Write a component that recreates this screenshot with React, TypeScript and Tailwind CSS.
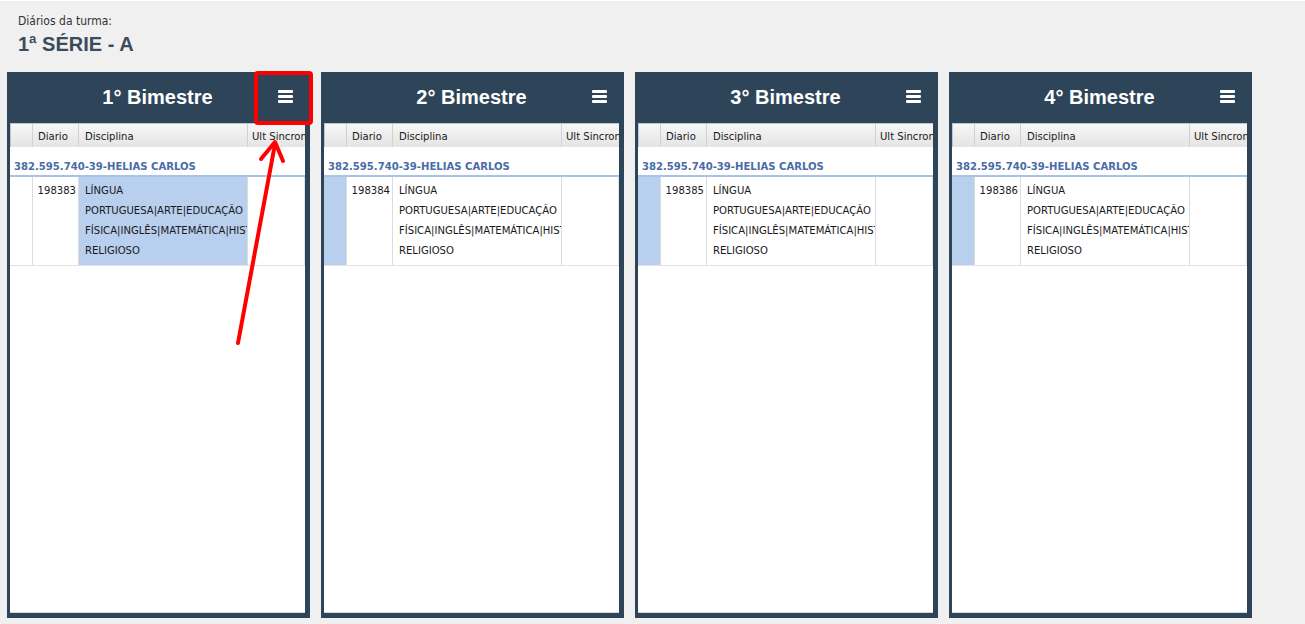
import React from 'react';

type Bimestre = {
  titulo: string;
  diario: string;
  marcada: 'sel' | 'disc';
};

const bimestres: Bimestre[] = [
  { titulo: '1° Bimestre', diario: '198383', marcada: 'disc' },
  { titulo: '2° Bimestre', diario: '198384', marcada: 'sel' },
  { titulo: '3° Bimestre', diario: '198385', marcada: 'sel' },
  { titulo: '4° Bimestre', diario: '198386', marcada: 'sel' },
];

const linhasDisciplina = [
  'LÍNGUA',
  'PORTUGUESA|ARTE|EDUCAÇÃO',
  'FÍSICA|INGLÊS|MATEMÁTICA|HISTÓRIA|GEOGRAFIA|ENSINO',
  'RELIGIOSO',
];

function MenuIcon() {
  return (
    <div className="flex flex-col gap-[2px] w-[15px]">
      <span className="h-[3px] bg-white rounded-[1px]" />
      <span className="h-[3px] bg-white rounded-[1px]" />
      <span className="h-[3px] bg-white rounded-[1px]" />
    </div>
  );
}

function Painel({ b }: { b: Bimestre }) {
  return (
    <div className="w-[303px] h-[546px] flex flex-col bg-[#2e4559] pl-[3px] pr-[5px] pb-[5px]">
      <div className="h-[51px] shrink-0 grid grid-cols-[1fr_auto_1fr] items-center pb-[2px]">
        <div />
        <h2 className="text-white text-[20px] font-bold font-['Liberation_Sans',Arial,sans-serif] leading-none whitespace-nowrap">
          {b.titulo}
        </h2>
        <div className="flex justify-end pr-[12px]">
          <MenuIcon />
        </div>
      </div>

      <div className="flex-1 bg-white border-b border-[#d4d8dc] text-[11.2px] text-[#1a1a1a]">
        {/* cabeçalho da grade */}
        <div className="h-[24px] flex border-t border-l border-[#b7c7d8] bg-gradient-to-b from-[#f7f7f7] to-[#e4e4e4]">
          <div className="w-[22px] border-r border-[#d2d2d2]" />
          <div className="w-[46px] border-r border-[#d2d2d2] pl-[5px] pt-[3px] flex items-center">Diario</div>
          <div className="w-[169px] border-r border-[#d2d2d2] pl-[6px] pt-[3px] flex items-center">Disciplina</div>
          <div className="flex-1 pl-[4px] pt-[3px] flex items-center overflow-hidden whitespace-nowrap">Ult Sincronização</div>
        </div>

        {/* grupo do professor */}
        <div className="pt-[13px] pb-[1px] pl-[4px] border-b-2 border-[#a9c3e6]">
          <div className="leading-[14px] font-bold text-[#4a6ca6] whitespace-nowrap">
            382.595.740-39-HELIAS CARLOS
          </div>
        </div>

        {/* linha do diário */}
        <div className="h-[89px] flex border-b border-[#e2e2e2]">
          <div className={`w-[23px] border-r border-[#dcdcdc] ${b.marcada === 'sel' ? 'bg-[#b9cfee]' : ''}`} />
          <div className="w-[46px] border-r border-[#dcdcdc] pt-[4px] pr-[2px] text-right leading-[20px]">
            {b.diario}
          </div>
          <div className={`w-[169px] border-r border-[#dcdcdc] pt-[4px] pl-[6px] leading-[20px] overflow-hidden ${b.marcada === 'disc' ? 'bg-[#b9cfee]' : ''}`}>
            {linhasDisciplina.map((l) => (
              <div key={l} className="whitespace-nowrap">{l}</div>
            ))}
          </div>
          <div className="flex-1 border-r border-[#e4e4e4]" />
        </div>
      </div>
    </div>
  );
}

export default function App() {
  return (
    <div className="relative w-[1305px] h-[624px] overflow-hidden bg-[#f0f0f0] border-t border-white font-['DejaVu_Sans_Condensed','DejaVu_Sans',sans-serif]">
      <div className="pt-[12px] pl-[18px]">
        <div className="text-[12px] leading-[16px] text-[#333]">Diários da turma:</div>
        <div className="mt-[3px] text-[20px] leading-[24px] font-bold text-[#3c4b5a] font-['Liberation_Sans',Arial,sans-serif]">
          1ª SÉRIE - A
        </div>
      </div>

      <div className="mt-[16px] pl-[7px] flex gap-[11px]">
        {bimestres.map((b) => (
          <Painel key={b.titulo} b={b} />
        ))}
      </div>

      {/* destaque do menu */}
      <div className="absolute left-[254px] top-[70px] w-[59px] h-[54px] border-4 border-[#ff0000] rounded-[4px] pointer-events-none" />
      <svg className="absolute left-0 top-0 pointer-events-none" width="1305" height="624" viewBox="0 0 1305 624">
        <line x1="238" y1="342" x2="275" y2="143" stroke="#ff0000" strokeWidth="4" strokeLinecap="round" />
        <polyline points="261,158 275,141 283,160" fill="none" stroke="#ff0000" strokeWidth="4" strokeLinecap="round" strokeLinejoin="round" />
      </svg>
    </div>
  );
}
